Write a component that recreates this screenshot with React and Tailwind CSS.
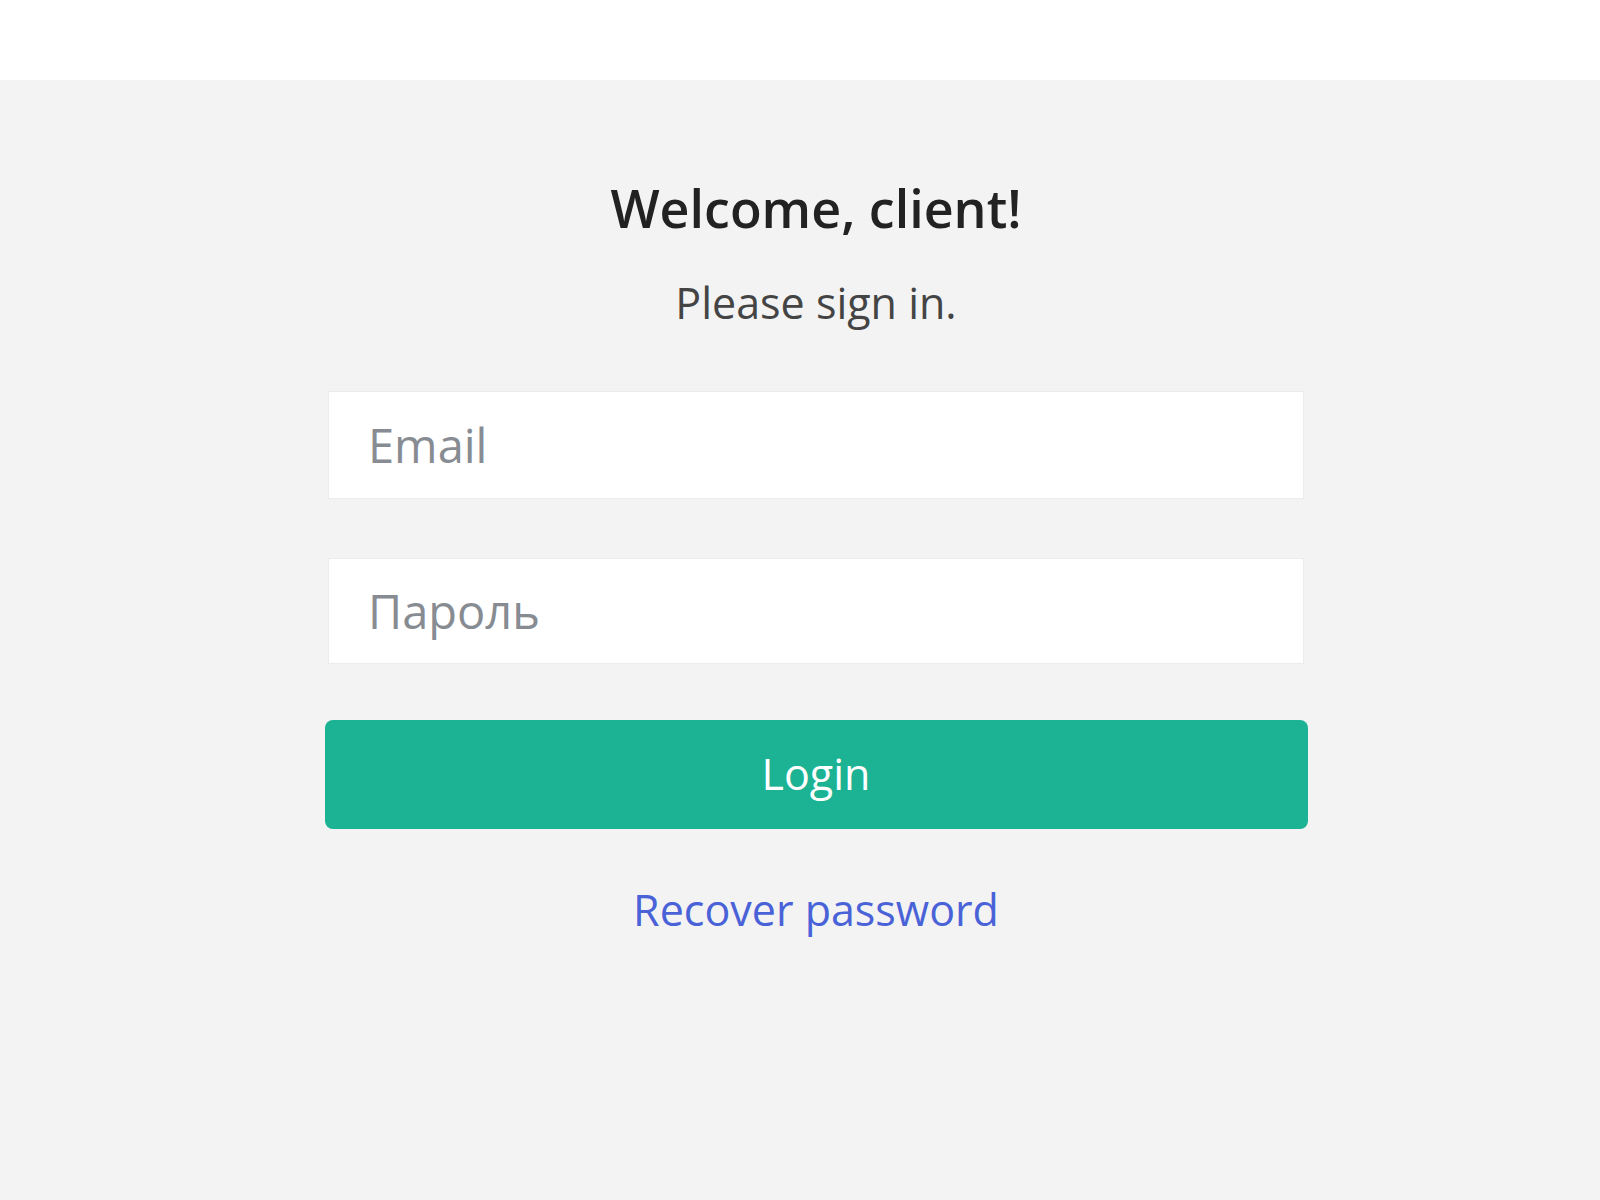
import React from 'react';

const App = () => {
    return (
        <div className="min-h-screen w-full bg-[#f3f3f3] font-['Open_Sans',sans-serif]">
            {/* Top bar */}
            <header className="h-[80px] bg-white" />

            {/* Login box */}
            <main className="flex justify-center pl-[32px]">
                <div className="w-[983px] flex flex-col items-center pt-[96px]">
                    <h1 className="text-[52px] leading-[64px] font-semibold text-[#222222]">Welcome, client!</h1>
                    <p className="mt-[36px] text-[43px] leading-[54px] text-[#444444]">Please sign in.</p>

                    <form className="w-full flex flex-col items-center mt-[61px]" onSubmit={(e) => e.preventDefault()}>
                        <input
                            type="email"
                            placeholder="Email"
                            className="w-[976px] h-[108px] bg-white border border-[#ececec] px-[39px] text-[47px] text-[#333] placeholder:text-[#878c92] outline-none"
                        />
                        <input
                            type="password"
                            placeholder="Пароль"
                            className="mt-[59px] w-[976px] h-[106px] bg-white border border-[#ececec] px-[39px] text-[47px] text-[#333] placeholder:text-[#878c92] outline-none"
                        />
                        <button
                            type="submit"
                            className="mt-[56px] w-full h-[109px] rounded-[8px] bg-[#1bb394] text-white text-[43px]"
                        >
                            Login
                        </button>
                    </form>

                    <a href="#" className="mt-[53px] text-[43px] leading-[56px] text-[#4a62d8]">Recover password</a>
                </div>
            </main>
        </div>
    );
};

export default App;
